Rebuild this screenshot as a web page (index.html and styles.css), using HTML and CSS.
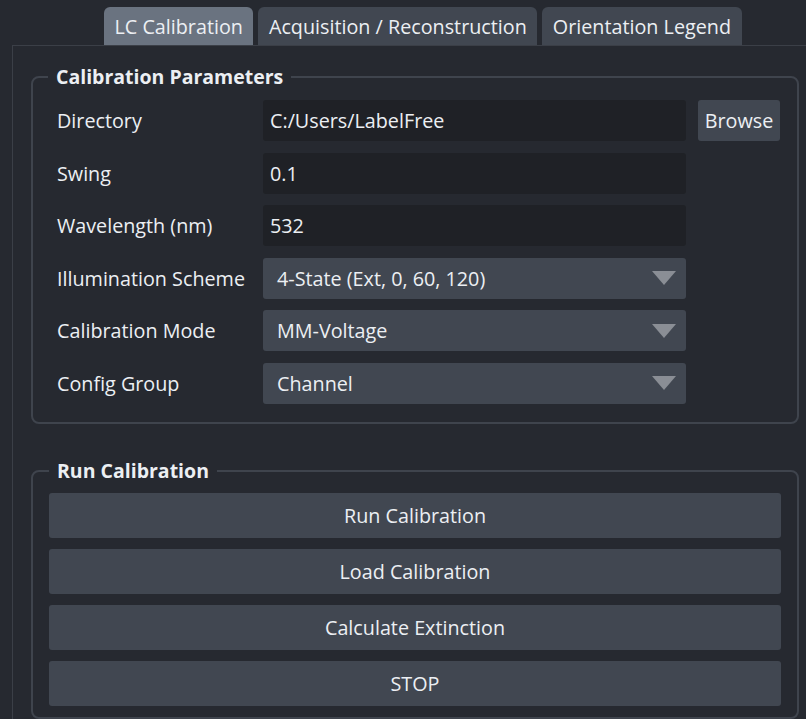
FILE: index.html
```html
<!DOCTYPE html>
<html>
<head>
<meta charset="utf-8">
<link rel="stylesheet" href="styles.css">
</head>
<body>
<div class="tabs">
  <div class="tab active">LC Calibration</div>
  <div class="tab">Acquisition / Reconstruction</div>
  <div class="tab">Orientation Legend</div>
</div>
<div class="pane">
  <fieldset class="group params">
    <legend>Calibration Parameters</legend>
    <div class="form">
      <div class="label">Directory</div>
      <div class="field input">C:/Users/LabelFree</div>
      <div class="btn browse">Browse</div>

      <div class="label">Swing</div>
      <div class="field input">0.1</div>
      <div></div>

      <div class="label">Wavelength (nm)</div>
      <div class="field input">532</div>
      <div></div>

      <div class="label">Illumination Scheme</div>
      <div class="field combo"><span>4-State (Ext, 0, 60, 120)</span><i class="arrow"></i></div>
      <div></div>

      <div class="label">Calibration Mode</div>
      <div class="field combo"><span>MM-Voltage</span><i class="arrow"></i></div>
      <div></div>

      <div class="label">Config Group</div>
      <div class="field combo"><span>Channel</span><i class="arrow"></i></div>
      <div></div>
    </div>
  </fieldset>

  <fieldset class="group run">
    <legend>Run Calibration</legend>
    <div class="buttons">
      <div class="btn wide">Run Calibration</div>
      <div class="btn wide">Load Calibration</div>
      <div class="btn wide">Calculate Extinction</div>
      <div class="btn wide">STOP</div>
    </div>
  </fieldset>
</div>
</body>
</html>
```

FILE: styles.css
```css
html, body {
  margin: 0;
  padding: 0;
  background: #262930;
  height: 719px;
  overflow: hidden;
}
body {
  font-family: "Open Sans", "Noto Sans", sans-serif;
  font-size: 19.75px;
  color: #eceff3;
}
.tabs {
  display: flex;
  gap: 5px;
  padding: 7px 0 0 104px;
  height: 38px;
}
.tab {
  background: #414751;
  border-radius: 6px 6px 0 0;
  padding: 0 10.5px;
  height: 38px;
  line-height: 39px;
  white-space: nowrap;
}
.tab.active {
  background: #6a7380;
}
.pane {
  margin-left: 12px;
  border-top: 1px solid #3b3f47;
  border-left: 1px solid #3b3f47;
  height: 700px;
  padding: 19px 0 0 18px;
  box-sizing: border-box;
}
.group {
  margin: 0;
  width: 768px;
  box-sizing: border-box;
  border: 2px solid #3f444d;
  border-radius: 8px;
  padding: 0 16px 0 16px;
  min-width: 0;
}
.group legend {
  font-weight: 700;
  font-size: 19.5px;
  padding: 0 8px;
  margin-left: 0;
  line-height: 24px;
}
.params {
  padding-bottom: 18px;
  padding-left: 15px;
}
.form {
  display: grid;
  grid-template-columns: 194px 423px 82px;
  column-gap: 12px;
  row-gap: 11.5px;
  padding-left: 9px;
  margin-top: 11px;
  align-items: center;
}
.label {
  white-space: nowrap;
}
.field {
  height: 41px;
  border-radius: 3px;
  display: flex;
  align-items: center;
}
.input {
  background: #1f2126;
  padding-left: 7px;
}
.combo {
  background: #414751;
  padding: 0 10px 0 14px;
  justify-content: space-between;
}
.arrow {
  width: 0;
  height: 0;
  border-left: 12px solid transparent;
  border-right: 12px solid transparent;
  border-top: 14px solid #8a8e95;
}
.btn {
  background: #414751;
  border-radius: 3px;
  display: flex;
  align-items: center;
  justify-content: center;
}
.browse {
  height: 41px;
}
.run {
  margin-top: 35px;
  height: 260px;
  padding-left: 16px;
}
.buttons {
  display: flex;
  flex-direction: column;
  gap: 11px;
  margin-top: 10px;
}
.wide {
  height: 45px;
}
```
